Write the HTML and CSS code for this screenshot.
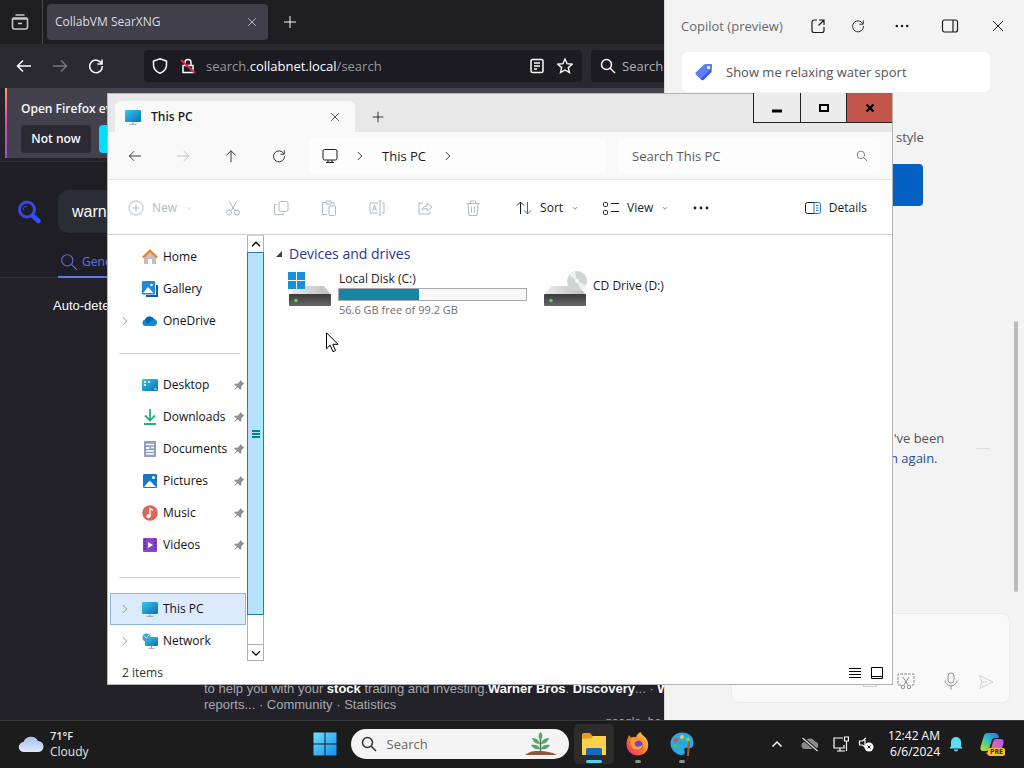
FILE: index.html
```html
<!DOCTYPE html>
<html lang="en">
<head>
	<meta charset="UTF-8">
	<title>This PC</title>
	<link rel="stylesheet" href="styles.css">
</head>
<body>
	<!-- shared icons -->
	<svg class="sprite" aria-hidden="true">
		<defs>
			<linearGradient id="screen" x1="0" y1="0" x2="1" y2="1"><stop offset="0" stop-color="#35c8e8"/><stop offset="1" stop-color="#0b6fb8"/></linearGradient>
			<linearGradient id="drivetop" x1="0" y1="0" x2="1" y2="0"><stop offset="0" stop-color="#ececec"/><stop offset="1" stop-color="#bdbdbd"/></linearGradient>
			<linearGradient id="drivefront" x1="0" y1="0" x2="0" y2="1"><stop offset="0" stop-color="#3c3c3c"/><stop offset="1" stop-color="#666"/></linearGradient>
			<linearGradient id="start" x1="0" y1="0" x2="1" y2="1"><stop offset="0" stop-color="#6fe3ff"/><stop offset="1" stop-color="#0f8cf0"/></linearGradient>
			<linearGradient id="cloud" x1="0" y1="0" x2="0" y2="1"><stop offset="0" stop-color="#a9bff2"/><stop offset="1" stop-color="#dfe8fb"/></linearGradient>
			<linearGradient id="fox" x1="1" y1="0" x2="0" y2="1"><stop offset="0" stop-color="#ffe23d"/><stop offset=".5" stop-color="#ff7a2a"/><stop offset="1" stop-color="#f0227a"/></linearGradient>
			<linearGradient id="copa" x1="1" y1="0" x2="0" y2="1"><stop offset="0" stop-color="#2a6cf0"/><stop offset=".45" stop-color="#28b8d8"/><stop offset=".75" stop-color="#7cd848"/><stop offset="1" stop-color="#f0d040"/></linearGradient>
			<linearGradient id="copb" x1="1" y1="0" x2="0" y2="1"><stop offset="0" stop-color="#a060f8"/><stop offset=".6" stop-color="#f060a8"/><stop offset="1" stop-color="#ff9860"/></linearGradient>
		</defs>
		<symbol id="i-left" viewBox="0 0 16 16"><path d="M15 8H1.500M7 2.500L1.500 8L7 13.500"/></symbol>
		<symbol id="i-right" viewBox="0 0 16 16"><path d="M1 8h13.500M9 2.500L14.500 8L9 13.500"/></symbol>
		<symbol id="i-up" viewBox="0 0 16 16"><path d="M8 15V2M2.500 7.500L8 2l5.500 5.500"/></symbol>
		<symbol id="i-reload" viewBox="0 0 16 16"><path d="M13.600 5.500A6.300 6.300 0 1 0 14.300 8M14 1.500V6H9.500"/></symbol>
		<symbol id="i-close" viewBox="0 0 16 16"><path d="M3 3l10 10M13 3L3 13"/></symbol>
		<symbol id="i-plus" viewBox="0 0 16 16"><path d="M8 2v12M2 8h12"/></symbol>
		<symbol id="i-search" viewBox="0 0 16 16"><circle cx="6.500" cy="6.500" r="5"/><path d="M10.200 10.200L15 15"/></symbol>
		<symbol id="i-chev" viewBox="0 0 16 16"><path d="M5.500 3.500L10 8l-4.500 4.500"/></symbol>
		<symbol id="i-down" viewBox="0 0 16 16"><path d="M3.500 6L8 10.500L12.500 6"/></symbol>
		<symbol id="i-top" viewBox="0 0 16 16"><path d="M3.500 10.500L8 6l4.500 4.500"/></symbol>
		<symbol id="i-dots" viewBox="0 0 16 16"><g fill="currentColor" stroke="none"><circle cx="2" cy="8" r="1.400"/><circle cx="8" cy="8" r="1.400"/><circle cx="14" cy="8" r="1.400"/></g></symbol>
		<symbol id="i-pin" viewBox="0 0 12 12"><path d="M7 1l4.500 4-1.300.3-2 2.200.1 2.500-1 .8-2.500-2.600L1.500 11 1 10.700l2.800-3L1.300 5.500l.8-1 2.600.2L6.800 2.500z" fill="#8f8f8f" stroke="none"/></symbol>
		<symbol id="i-pc" viewBox="0 0 16 16"><rect x="0" y="1" width="16" height="12" rx="1.200" fill="url(#screen)" stroke="none"/><path d="M8 13v2M4.500 15.300h7" stroke="#8f9aa5"/></symbol>
	</svg>

	<main class="desktop">
		<!-- browser -->
		<section class="firefox">
			<div class="ff-tabs">
				<button class="ff-view" aria-label="Firefox View"><svg class="icon s20" viewBox="0 0 20 20"><path d="M5.500 3h9M2.500 7h15v8a2 2 0 0 1-2 2h-11a2 2 0 0 1-2-2zM3.500 7V6h13v1M8 11.500h4" stroke-width="1.500"/></svg></button>
				<div class="ff-tab">
					<span>CollabVM SearXNG</span>
					<button aria-label="Close tab"><svg class="icon s12"><use href="#i-close"/></svg></button>
				</div>
				<button class="ff-new" aria-label="New tab"><svg class="icon s16"><use href="#i-plus"/></svg></button>
			</div>
			<div class="ff-bar">
				<button aria-label="Back"><svg class="icon s16 bold"><use href="#i-left"/></svg></button>
				<button class="dim" aria-label="Forward"><svg class="icon s16 bold"><use href="#i-right"/></svg></button>
				<button aria-label="Reload"><svg class="icon s16 bold"><use href="#i-reload"/></svg></button>
				<div class="ff-url">
					<svg class="icon s16" viewBox="0 0 16 16"><path d="M8 .8l6.500 2.200v4c0 4-2.500 6.700-6.500 8.300C4 13.700 1.500 11 1.500 7V3z" stroke-width="1.500"/></svg>
					<svg class="icon s16" viewBox="0 0 16 16"><path d="M3 7.500h10v7H3zM5 7V4.500a3 3 0 0 1 6 0V7" stroke-width="1.500"/><path d="M1 2l14 13" stroke="#e22850" stroke-width="2"/></svg>
					<span class="ff-address">search.<b>collabnet.local</b>/search</span>
					<svg class="icon s16" viewBox="0 0 16 16"><rect x="2" y="1.500" width="12" height="13" rx="1.500" stroke-width="1.500"/><path d="M5 5h6M5 8h6M5 11h3" stroke-width="1.300"/></svg>
					<svg class="icon s16" viewBox="0 0 16 16"><path d="M8 1l2.100 4.700 5.100.5-3.900 3.400 1.200 5L8 12l-4.500 2.600 1.200-5L.8 6.200l5.100-.5z" stroke-width="1.400"/></svg>
				</div>
				<label class="ff-find"><svg class="icon s16 bold"><use href="#i-search"/></svg><input type="text" placeholder="Search" aria-label="Search"></label>
			</div>
			<div class="ff-note">
				<strong>Open Firefox even</strong>
				<div class="ff-note-btns">
					<button>Not now</button>
					<button class="primary" aria-label="Open automatically"></button>
				</div>
			</div>
			<div class="searx-head">
				<div class="searx-row">
					<svg class="searx-logo" viewBox="0 0 24 24"><circle cx="10" cy="9.500" r="7.500" fill="none" stroke="#3b46e8" stroke-width="3"/><path d="M6 10a4 4 0 0 1 4-4" fill="none" stroke="#3b46e8"/><path d="M16 16l5.500 5" stroke="#3050f8" stroke-width="4.500" stroke-linecap="round"/></svg>
					<input class="searx-q" type="text" value="warner" aria-label="Query">
				</div>
				<a class="searx-cat" href="#general"><svg class="icon s18"><use href="#i-search"/></svg>General</a>
			</div>
			<div class="searx-body">
				<p class="searx-lang">Auto-detect</p>
				<p class="searx-hit">to help you with your <b>stock</b> trading and investing.<b>Warner Bros</b>. <b>Discovery</b>... · <b>W</b><br>reports... · Community · Statistics</p>
				<p class="searx-engine">google &nbsp;ho</p>
			</div>
		</section>

		<!-- side panel -->
		<aside class="copilot">
			<header class="cp-head">
				<h2>Copilot (preview)</h2>
				<button aria-label="Open in browser"><svg class="icon s16" viewBox="0 0 16 16"><path d="M7 2H4a2 2 0 0 0-2 2v8.500a2 2 0 0 0 2 2h8a2 2 0 0 0 2-2V9M9 2h5v5M14 2L8.500 7.500" stroke-width="1.200"/></svg></button>
				<button aria-label="Refresh"><svg class="icon s14"><use href="#i-reload"/></svg></button>
				<button aria-label="More"><svg class="icon s14"><use href="#i-dots"/></svg></button>
				<button aria-label="Dock"><svg class="icon s18" viewBox="0 0 18 16"><rect x="1.500" y="2" width="15" height="12" rx="2" stroke-width="1.200"/><path d="M12 2v12" stroke-width="1.200"/></svg></button>
				<button aria-label="Close"><svg class="icon s16"><use href="#i-close"/></svg></button>
			</header>
			<button class="cp-hint">
				<svg class="s18" viewBox="0 0 18 18"><path d="M9.500 1.500L17 1l-.5 8-8 8c-.8.5-1.500.4-2 0L1 11.500c-.5-.7-.5-1.300 0-2z" fill="#3a58e0"/><path d="M9.500 1.500L17 1l-.2 4L6 16 1 11.500c-.5-.7-.5-1.300 0-2z" fill="#5a80f2"/><circle cx="13.500" cy="4.500" r="1.700" fill="#ffe38a"/></svg>
				Show me relaxing water sport
			</button>
			<p class="cp-style">style</p>
			<button class="cp-blue" aria-label="Choose"></button>
			<div class="cp-msg"><p>I've been<br><a href="#signin">n again.</a></p><hr></div>
			<div class="cp-input">
				<button class="faint" aria-label="Add image"><svg class="icon s18" viewBox="0 0 18 18"><path d="M2 14.500c1-4 13-4 14 0z"/></svg></button>
				<button aria-label="Snip"><svg class="icon s18" viewBox="0 0 18 18"><path d="M4 13H1V2h16v11h-3" stroke-dasharray="3 1"/><path d="M6 5l5 8M12 5l-5 8"/><circle cx="6" cy="15" r="1.800"/><circle cx="12" cy="15" r="1.800"/></svg></button>
				<button aria-label="Voice"><svg class="icon s18" viewBox="0 0 18 18"><rect x="6" y="1" width="6" height="10" rx="3"/><path d="M3 8.500c0 7 12 7 12 0M9 14v3.500"/></svg></button>
				<button class="faint" aria-label="Send"><svg class="icon s16" viewBox="0 0 16 16"><path d="M1.500 1.500L15 8 1.500 14.500 4 8zM4 8h5"/></svg></button>
			</div>
			<div class="cp-scroll"></div>
		</aside>

		<!-- file explorer -->
		<section class="explorer">
			<header class="ex-title">
				<div class="ex-tab">
					<svg class="s16"><use href="#i-pc"/></svg>
					<span>This PC</span>
					<button aria-label="Close tab"><svg class="icon s12"><use href="#i-close"/></svg></button>
				</div>
				<button class="ex-new" aria-label="New tab"><svg class="icon s14"><use href="#i-plus"/></svg></button>
				<div class="ex-caption">
					<button aria-label="Minimize"><svg width="12" height="12" viewBox="0 0 12 12"><path d="M1 9h10" stroke="#000" stroke-width="3"/></svg></button>
					<button aria-label="Maximize"><svg width="12" height="12" viewBox="0 0 12 12"><rect x="2" y="3" width="8" height="6" fill="none" stroke="#000" stroke-width="2"/></svg></button>
					<button class="close" aria-label="Close"><svg width="12" height="12" viewBox="0 0 12 12"><path d="M2.500 2.500l7 7M9.500 2.500l-7 7" stroke="#000" stroke-width="2.400"/></svg></button>
				</div>
			</header>
			<div class="ex-nav">
				<button aria-label="Back"><svg class="icon s14"><use href="#i-left"/></svg></button>
				<button class="off" aria-label="Forward"><svg class="icon s14"><use href="#i-right"/></svg></button>
				<button aria-label="Up"><svg class="icon s14"><use href="#i-up"/></svg></button>
				<button aria-label="Refresh"><svg class="icon s14"><use href="#i-reload"/></svg></button>
				<nav class="ex-path">
					<svg class="icon s16" viewBox="0 0 16 16"><rect x="1" y="1.500" width="14" height="10.500" rx="1.500"/><path d="M6 12v2.500M10 12v2.500M4 14.500h8"/></svg>
					<svg class="icon s14"><use href="#i-chev"/></svg>
					<a href="#pc">This PC</a>
					<svg class="icon s14"><use href="#i-chev"/></svg>
				</nav>
				<label class="ex-search"><input type="text" placeholder="Search This PC" aria-label="Search This PC"><svg class="icon s12"><use href="#i-search"/></svg></label>
			</div>
			<div class="ex-tools">
				<button class="off"><svg class="icon s16" viewBox="0 0 16 16"><circle cx="8" cy="8" r="7"/><path d="M8 4.500v7M4.500 8h7"/></svg>New<svg class="icon s8"><use href="#i-down"/></svg></button>
				<div class="ex-edit">
					<button class="off" aria-label="Cut"><svg class="icon s16" viewBox="0 0 16 16"><path d="M4 1l6 10M12 1L6 11"/><circle cx="4" cy="12.500" r="2.500"/><circle cx="12" cy="12.500" r="2.500"/></svg></button>
					<button class="off" aria-label="Copy"><svg class="icon s16" viewBox="0 0 16 16"><rect x="6" y="1.500" width="9" height="10" rx="1.500"/><path d="M3.500 4.500H1.500v10h9v-1.500"/></svg></button>
					<button class="off" aria-label="Paste"><svg class="icon s16" viewBox="0 0 16 16"><path d="M6 14.500H1.500v-12H5M10 2.500h3V5M5 1h5v3H5z"/><rect x="8" y="6" width="6.500" height="9.500" rx="1"/></svg></button>
					<button class="off" aria-label="Rename"><svg class="icon s16" viewBox="0 0 16 16"><path d="M9 13H1V3h8M13 3h2v10h-2M11 1v14M9.500 1h3M9.500 15h3M3.500 11l2-6 2 6M4 9h3"/></svg></button>
					<button class="off" aria-label="Share"><svg class="icon s16" viewBox="0 0 16 16"><path d="M6 3H2v11h11v-3M5 10c.5-3 2.500-4 5-4V3l5 4-5 4V8.500c-2 0-3.500 0-5 1.500z"/></svg></button>
					<button class="off" aria-label="Delete"><svg class="icon s16" viewBox="0 0 16 16"><path d="M1.500 3.500h13M5.500 3V1h5v2M3 3.500l1 12h8l1-12M6.500 6.500v6M9.500 6.500v6"/></svg></button>
				</div>
				<button class="sort"><svg class="icon s16" viewBox="0 0 16 16"><path d="M4.500 14V2M1 5.500L4.500 2 8 5.500"/><path d="M11.500 2v12M8 10.500l3.500 3.500 3.500-3.500" stroke="#1878c8"/></svg>Sort<svg class="icon s8"><use href="#i-down"/></svg></button>
				<button class="view"><svg class="icon s16" viewBox="0 0 16 16"><rect x=".5" y="2.500" width="4" height="4" rx="1"/><rect x=".5" y="10.500" width="4" height="4" rx="1"/><path d="M8 3.500h8M8 11.500h8"/></svg>View<svg class="icon s8"><use href="#i-down"/></svg></button>
				<button aria-label="More"><svg class="icon s16"><use href="#i-dots"/></svg></button>
				<button class="details"><svg class="icon s16" viewBox="0 0 16 16"><path d="M9 2.500H2.500a2 2 0 0 0-2 2v7a2 2 0 0 0 2 2H9"/><path d="M9 2.500h4.500a2 2 0 0 1 2 2v7a2 2 0 0 1-2 2H9zM11 5.500h2.500M11 8h2.500M11 10.500h2.500" stroke="#1878c8"/></svg>Details</button>
			</div>
			<div class="ex-body">
				<nav class="ex-tree">
					<a href="#home"><svg class="s16 glyph" viewBox="0 0 16 16"><path d="M2 8l6-5 6 5v7h-4v-5H6v5H2z" fill="#c4c0c0"/><path d="M.8 8.500L8 1.800l7.200 6.700" fill="none" stroke="#e8822a" stroke-width="2.200"/></svg>Home</a>
					<a href="#gallery"><svg class="s16 glyph" viewBox="0 0 16 16"><path d="M4 15h11V4" fill="none" stroke="#0f5ea8" stroke-width="2"/><rect width="13" height="13.500" rx="1" fill="#1c8ad8"/><path d="M1 12l5-6 5.500 6z" fill="#fff"/><circle cx="9.500" cy="4" r="1.300" fill="#fff"/></svg>Gallery</a>
					<a href="#onedrive"><svg class="icon s14 twist"><use href="#i-chev"/></svg><svg class="s16 glyph" viewBox="0 0 16 16"><path d="M3.500 13a3.300 3.300 0 0 1-.5-6.500 5 5 0 0 1 9-.5 3.600 3.600 0 0 1 .5 7z" fill="#1689dc"/><path d="M3 6.500a5 5 0 0 1 9-.5L5 11z" fill="#0a62b0"/></svg>OneDrive</a>
					<hr>
					<a href="#desktop"><svg class="s16 glyph" viewBox="0 0 16 16"><rect y="2" width="16" height="12" rx="1.200" fill="url(#screen)"/><path d="M2 5h2M2 8h2M6 5h2" stroke="#fff" stroke-width="1.300"/><path d="M12 12h3" stroke="#bfe6ff"/></svg>Desktop<svg class="s12 pin"><use href="#i-pin"/></svg></a>
					<a href="#downloads"><svg class="s16 glyph" viewBox="0 0 16 16"><path d="M8 0v11M3 6.500L8 11.500l5-5M2 15h12" fill="none" stroke="#27b07a" stroke-width="1.800"/></svg>Downloads<svg class="s12 pin"><use href="#i-pin"/></svg></a>
					<a href="#documents"><svg class="s16 glyph" viewBox="0 0 16 16"><rect x="2" y="0" width="12" height="16" rx="1" fill="#8f9fc4"/><path d="M4 3.500h8M4 10h8M4 13h8M9 6.500h3" stroke="#fff" stroke-width="1.300"/><path d="M4 6h3.500v2H4z" fill="#fff"/></svg>Documents<svg class="s12 pin"><use href="#i-pin"/></svg></a>
					<a href="#pictures"><svg class="s16 glyph" viewBox="0 0 16 16"><rect x="1" y="1" width="14" height="14" rx="1.200" fill="#1778c8"/><path d="M2 14l5.500-6.500L14 14z" fill="#fff"/><circle cx="11.500" cy="4.500" r="1.500" fill="#fff"/></svg>Pictures<svg class="s12 pin"><use href="#i-pin"/></svg></a>
					<a href="#music"><svg class="s16 glyph" viewBox="0 0 16 16"><circle cx="8" cy="8" r="7.800" fill="#d9685a"/><path d="M8 11.500V3.500l3 2" fill="none" stroke="#fff" stroke-width="1.400"/><circle cx="6.500" cy="11.200" r="2" fill="#fff"/></svg>Music<svg class="s12 pin"><use href="#i-pin"/></svg></a>
					<a href="#videos"><svg class="s16 glyph" viewBox="0 0 16 16"><rect x="1" y="1" width="14" height="14" rx="1" fill="#8a44cc"/><path d="M3 2v12M13 2v12" stroke="#5a2396" stroke-width="1.500" stroke-dasharray="1.500 1.500"/><path d="M6 5l5 3-5 3z" fill="#fff"/></svg>Videos<svg class="s12 pin"><use href="#i-pin"/></svg></a>
					<hr>
					<a class="on" href="#pc"><svg class="icon s14 twist"><use href="#i-chev"/></svg><svg class="s16 glyph"><use href="#i-pc"/></svg>This PC</a>
					<a href="#network"><svg class="icon s14 twist"><use href="#i-chev"/></svg><svg class="s16 glyph" viewBox="0 0 16 16"><rect x="3" y="4" width="13" height="9" rx="1" fill="url(#screen)"/><path d="M9.500 13v2M6.500 15.300h6" stroke="#8f9aa5"/><circle cx="4.500" cy="4.500" r="4" fill="#3f9ed0"/><path d="M1.500 3c2 0 2 2 3 2s1-3 3-3" stroke="#d6f0fa" fill="none"/></svg>Network</a>
				</nav>
				<div class="ex-scroll">
					<button aria-label="Scroll up"><svg class="icon s14 bold"><use href="#i-top"/></svg></button>
					<div class="ex-thumb"><i></i><i></i><i></i></div>
					<button aria-label="Scroll down"><svg class="icon s14 bold"><use href="#i-down"/></svg></button>
				</div>
				<div class="ex-files">
					<h3><svg width="8" height="8" viewBox="0 0 8 8"><path d="M7 1v6H1z" fill="#404040"/></svg>Devices and drives</h3>
					<div class="drives">
						<div class="drive">
							<svg class="disk" viewBox="0 0 44 38"><path d="M8 15h28l7 9H1z" fill="url(#drivetop)"/><rect x="1" y="23" width="42" height="12" rx="1" fill="url(#drivefront)"/><circle cx="8" cy="29.500" r="1.800" fill="#46e04a"/><path d="M0 1h8v8H0zM9 1h8v8H9zM0 10h8v8H0zM9 10h8v8H9z" fill="#1590dc"/></svg>
							<div class="drive-info">
								<span>Local Disk (C:)</span>
								<div class="bar"><div class="fill" style="width:43%"></div></div>
								<small>56.6 GB free of 99.2 GB</small>
							</div>
						</div>
						<div class="drive">
							<svg class="disk" viewBox="0 0 44 38"><path d="M8 15h28l7 9H1z" fill="url(#drivetop)"/><rect x="1" y="23" width="42" height="12" rx="1" fill="url(#drivefront)"/><circle cx="8" cy="29.500" r="1.800" fill="#46e04a"/><circle cx="34" cy="10" r="10" fill="#cfd4d4"/><path d="M34 10L26 3.500a10 10 0 0 1 6-3zM34 10l9 4a10 10 0 0 1-5 5z" fill="#eef2f2"/><circle cx="34" cy="10" r="2" fill="#f8f8f8"/></svg>
							<span>CD Drive (D:)</span>
						</div>
					</div>
				</div>
			</div>
			<footer class="ex-status">
				<span>2 items</span>
				<button aria-label="Details view"><svg width="12" height="12" viewBox="0 0 12 12"><path d="M0 1.500h12M0 4.500h12M0 7.500h12M0 10.500h12" stroke="#000"/></svg></button>
				<button aria-label="Tiles view"><svg width="12" height="12" viewBox="0 0 12 12"><path d="M.5.500h11v11H.5zM0 9.500h12" fill="none" stroke="#000"/></svg></button>
			</footer>
		</section>
		<svg class="cursor" viewBox="0 0 13 21"><path d="M.5.800v16l3.700-3.600 2.700 6.500 2.600-1.100-2.700-6.300h5.200z" fill="#fff" stroke="#000"/></svg>
	</main>

	<footer class="taskbar">
		<button class="weather">
			<svg width="26" height="18" viewBox="0 0 26 18"><path d="M6 17a5 5 0 0 1-.5-10A8 8 0 0 1 20 6a5.500 5.500 0 0 1 0 11z" fill="url(#cloud)"/></svg>
			<span><b>71°F</b><br>Cloudy</span>
		</button>
		<div class="tb-center">
			<button aria-label="Start"><svg width="24" height="24" viewBox="0 0 24 24"><path d="M.5.500h11v11H.5zM12.500.500h11v11h-11zM.5 12.500h11v11H.5zM12.500 12.500h11v11h-11z" fill="url(#start)"/></svg></button>
			<label class="tb-search">
				<svg class="icon s16 bold"><use href="#i-search"/></svg>
				<input type="text" placeholder="Search" aria-label="Search">
				<svg width="32" height="24" viewBox="0 0 32 24"><path d="M0 23c5-4 9-4 15-4s11 1 17 4z" fill="#8a5a3a"/><path d="M15.500 20V4" stroke="#3c7a4a" stroke-width="1.500"/><path d="M15.500 8c-3-3-2-6 0-8 2 2 3 5 0 8zM15 12C10 12 8 9 7 6c4 0 7 2 8 6zM16 12c5 0 7-3 8-6-4 0-7 2-8 6zM15 17c-5 1-7-1-9-4 4-1 8 0 9 4zM16 17c5 1 7-1 9-4-4-1-8 0-9 4z" fill="#5aa36c"/></svg>
			</label>
			<button class="on running" aria-label="File Explorer"><svg width="26" height="24" viewBox="0 0 26 24"><path d="M1 2.500A1.500 1.500 0 0 1 2.500 1H9l2.500 3H23a1.500 1.500 0 0 1 1.500 1.500V21H1z" fill="#e0a020"/><path d="M1 6.500h9L12 4h13v19H1z" fill="#ffd04c"/><path d="M5 23v-5.500A1.500 1.500 0 0 1 6.500 16h13a1.500 1.500 0 0 1 1.500 1.500V23z" fill="#1768b8"/></svg></button>
			<button class="running" aria-label="Firefox"><svg width="24" height="24" viewBox="0 0 24 24"><path d="M14.500 0c1 3 4 4 6 7 4 7 1 16-8.500 16.500C3 23.500-.5 16 .8 9 1.300 6 3 4 3 3l2 2.500C7 4.500 9 4.500 10 5.200 11 2 13 1 14.500 0z" fill="url(#fox)"/><circle cx="12" cy="13.500" r="5" fill="#7a3fd8"/><path d="M5 7c3-1 5 0 7 2-3 0-4 2-3 4 1 3 6 2 8-1-.5 5-4 7-8 5.500C5 16 3.500 11 5 7z" fill="#ff9e2c"/></svg></button>
			<button class="running" aria-label="Paint"><svg width="24" height="24" viewBox="0 0 24 24"><path d="M12 .5C19 .5 23.500 5 23.500 11c0 4-2 6-5 5-3-1-5 0-4 3s-1 4.500-4 4C5 22 .5 17 .5 11.500S5 .5 12 .5z" fill="#2ba8e0"/><circle cx="6" cy="8" r="2" fill="#e8483c"/><circle cx="12" cy="5" r="2" fill="#f5c83c"/><circle cx="5.500" cy="14" r="2" fill="#4cc25a"/><circle cx="18" cy="7.500" r="2" fill="#74d858"/><path d="M18 9l2 1-1 14h-2z" fill="#a85a2c"/></svg></button>
		</div>
		<div class="tb-tray">
			<button aria-label="Show hidden icons"><svg class="icon s16 bold"><use href="#i-top"/></svg></button>
			<button class="tray-cloud" aria-label="OneDrive"><svg class="s18" viewBox="0 0 18 18"><path d="M4 14a3.500 3.500 0 0 1 0-7 5.500 5.500 0 0 1 10-.5A3.800 3.800 0 0 1 14 14z" fill="#8a8a8a"/><path d="M1.500 3l15 13" stroke="#1c1c1c" stroke-width="3"/><path d="M1.500 3l15 13" stroke="#ddd" stroke-width="1.200"/></svg></button>
			<button class="tray-net" aria-label="Network and volume">
				<svg class="icon s16" viewBox="0 0 16 16"><path d="M10 2H1v10h10V9M4 15h8M7 12v3" stroke-width="1.200"/><path d="M11.500 1h4v4h-4zM13.500 5v10" stroke-width="1.200"/></svg>
				<svg class="icon s16" viewBox="0 0 16 16"><path d="M8 2L4.500 5H1.500v4h3L7 11V2" stroke-width="1.200"/><circle cx="11" cy="11" r="4.500" fill="#fff" stroke="none"/><path d="M9.500 9.500l3 3M12.500 9.500l-3 3" stroke="#222"/></svg>
			</button>
			<button class="clock">12:42 AM<br>6/6/2024</button>
			<button aria-label="Notifications"><svg class="s16" viewBox="0 0 16 16"><path d="M8 1a5 5 0 0 1 5 5v4l1.500 2.500h-13L3 10V6a5 5 0 0 1 5-5zM6 13.500h4a2 2 0 0 1-4 0z" fill="#5fdcf5"/></svg></button>
			<button class="tray-cop" aria-label="Copilot">
				<svg width="24" height="24" viewBox="0 0 24 24"><path d="M8 1h7c2 0 3 1 3.500 3L19 6h-4c-2 0-3 1-3.500 3L9.500 16c-.5 2-1.500 3-3.500 3H3c-2 0-3-2-2.500-4l3-10C4.200 2.500 5.500 1 8 1z" fill="url(#copa)"/><path d="M16 7h5c2 0 3 2 2.500 4l-2.500 9c-.6 2-2 3-4 3H9c-1.500 0-2.500-1-3-2.500 3 0 4.500-1.500 5-4l2-6.500c.5-2 1.500-3 3-3z" fill="url(#copb)"/></svg>
				<span>PRE</span>
			</button>
		</div>
	</footer>
</body>
</html>
```
FILE: styles.css
```css
*{
	box-sizing: border-box;
}
body{
	display: flex;
	flex-direction: column;
	height: 100vh;
	margin: 0;
	overflow: hidden;
	font: 12px/16px "Open Sans", "Noto Sans", sans-serif;
	color: #1b1b1b;
}
button,input{
	font: inherit;
	color: inherit;
	background: none;
	border: 0;
	padding: 0;
	margin: 0;
}
button{
	display: flex;
	align-items: center;
	justify-content: center;
	flex: none;
}
input{
	min-width: 0;
	flex: 1;
	outline: none;
}
input::placeholder{
	color: inherit;
	opacity: 1;
}
a{
	color: inherit;
	text-decoration: none;
}
p,h2,h3{
	margin: 0;
	font-weight: 400;
}
svg{
	flex: none;
}
.sprite{
	position: absolute;
	width: 0;
	height: 0;
}
.icon{
	fill: none;
	stroke: currentColor;
	stroke-width: 1;
}
.bold{
	stroke-width: 1.5;
}
.s8{ width: 8px; height: 8px; }
.s12{ width: 12px; height: 12px; }
.s14{ width: 14px; height: 14px; }
.s16{ width: 16px; height: 16px; }
.s18{ width: 18px; height: 18px; }
.s20{ width: 20px; height: 20px; }

.desktop{
	position: relative;
	flex: 1;
	min-height: 0;
	overflow: hidden;
	background: #1c1b22;
}

/* firefox */
.firefox{
	position: absolute;
	top: 0;
	left: 0;
	right: 360px;
	bottom: 0;
	display: flex;
	flex-direction: column;
	overflow: hidden;
	color: #fbfbfe;
	background: #222228;
}
.ff-tabs{
	display: flex;
	align-items: center;
	height: 44px;
	flex: none;
	background: #1e1e22;
}
.ff-view{
	width: 43px;
	height: 44px;
	padding-right: 3px;
	border-right: 1px solid #48474f;
	color: #c8c8cc;
}
.ff-tab{
	display: flex;
	align-items: center;
	justify-content: space-between;
	width: 221px;
	height: 36px;
	margin-left: 4px;
	padding: 0 10px 0 8px;
	border-radius: 4px;
	background: #403f4a;
	color: #dcdce0;
}
.ff-new{
	width: 44px;
}
.ff-bar{
	display: flex;
	align-items: center;
	height: 44px;
	flex: none;
	padding-left: 6px;
	background: #2a2930;
}
.ff-bar button{
	width: 36px;
	height: 32px;
}
.ff-bar .dim{
	color: #78777e;
}
.ff-url{
	display: flex;
	align-items: center;
	gap: 12px;
	flex: 1;
	height: 32px;
	margin-left: 30px;
	padding: 0 9px 0 8px;
	border-radius: 4px;
	background: #1c1b22;
}
.ff-address{
	flex: 1;
	margin-left: -2px;
	font-size: 13px;
	color: #98979e;
}
.ff-address b{
	font-weight: 400;
	color: #fbfbfe;
}
.ff-find{
	display: flex;
	align-items: center;
	gap: 6px;
	width: 73px;
	height: 32px;
	margin-left: 9px;
	padding-left: 9px;
	border-radius: 4px 0 0 4px;
	background: #1c1b22;
	font-size: 13px;
}
.ff-find input{
	color: #b0afb5;
}
.ff-note{
	flex: none;
	height: 70px;
	margin: 0 0 3px 5px;
	padding: 11px 0 0 14px;
	border-left: 2px solid;
	border-image: linear-gradient(#ff9a62, #d94f9a, #8a50e0) 1;
	background: #42414d;
}
.ff-note strong{
	display: block;
	line-height: 20px;
	margin-bottom: 6px;
	font-weight: 600;
}
.ff-note-btns{
	display: flex;
	gap: 8px;
}
.ff-note button{
	width: 70px;
	height: 28px;
	border-radius: 4px;
	background: #2b2a33;
	font-weight: 600;
}
.ff-note .primary{
	background: #00ddff;
}
.searx-head{
	flex: none;
	height: 117px;
	padding: 28px 0 0 17px;
	background: #1e1e24;
	border-top: 1px solid #2a2a30;
	border-bottom: 1px solid #303038;
	font-family: "Noto Sans", sans-serif;
}
.searx-row{
	display: flex;
	align-items: center;
	gap: 17px;
	margin-bottom: 15px;
}
.searx-logo{
	width: 24px;
	height: 24px;
}
.searx-q{
	height: 43px;
	padding: 0 14px;
	border-radius: 10px;
	background: #2b2d35;
	font: 16px "Liberation Sans", Arial, sans-serif;
}
.searx-cat{
	display: flex;
	align-items: center;
	gap: 4px;
	width: 90px;
	height: 30px;
	margin-left: 41px;
	padding-left: 2px;
	border-bottom: 2px solid #5a7ae8;
	color: #5a6ee0;
	font-size: 12px;
}
.searx-body{
	display: flex;
	flex-direction: column;
	flex: 1;
	min-height: 0;
	padding: 20px 0 0 53px;
	font-family: "Liberation Sans", Arial, sans-serif;
	font-size: 13px;
}
.searx-hit{
	margin: auto 0 1px 151px;
	color: #a8a8ae;
	white-space: nowrap;
}
.searx-hit b{
	color: #fff;
}
.searx-engine{
	height: 6px;
	margin-left: 552px;
	overflow: hidden;
	color: #a8a8ae;
	font-size: 12px;
	white-space: nowrap;
}

/* copilot */
.copilot{
	position: absolute;
	top: 0;
	right: 0;
	bottom: 0;
	width: 360px;
	padding: 0 14px 17px 16px;
	display: flex;
	flex-direction: column;
	background: #f3f3f3;
	border-left: 1px solid #d8d8e0;
}
.cp-head{
	display: flex;
	align-items: center;
	height: 52px;
	flex: none;
	margin-right: -12px;
}
.cp-head h2{
	flex: 1;
	font-size: 13px;
	color: #6a6a6a;
}
.cp-head button{
	width: 40px;
	height: 32px;
}
.cp-head button:nth-of-type(n+3){
	width: 48px;
}
.cp-hint{
	justify-content: flex-start;
	gap: 13px;
	height: 40px;
	margin: 0 20px 0 1px;
	padding-left: 13px;
	border-radius: 6px;
	background: #fff;
	color: #555;
	font-size: 13px;
}
.cp-style{
	margin: 35px 0 17px 215px;
	font-size: 13px;
	line-height: 20px;
	color: #555;
}
.cp-blue{
	height: 42px;
	margin-right: 87px;
	border-radius: 4px;
	background: #0560c4;
}
.cp-msg{
	display: flex;
	align-items: center;
	justify-content: space-between;
	margin: 222px 20px 0 209px;
	font-size: 13px;
	line-height: 20px;
	color: #555;
}
.cp-msg a{
	color: #24509c;
}
.cp-msg hr{
	width: 14px;
	margin: 0;
	border: 0;
	border-top: 1px solid #dedede;
}
.cp-input{
	display: flex;
	align-items: flex-end;
	justify-content: flex-end;
	gap: 18px;
	height: 90px;
	margin: auto 0 0 50px;
	padding: 0 15px 12px;
	border: 1px solid #ececec;
	border-radius: 8px;
	background: #f9f9f9;
	color: #909090;
}
.cp-input .faint{
	color: #d0d0d0;
}
.cp-input button + button + button{
	margin-left: 9px;
}
.cp-input button:last-child{
	margin-left: 0;
}
.cp-scroll{
	position: absolute;
	top: 321px;
	right: 6px;
	width: 4px;
	height: 271px;
	border-radius: 2px;
	background: #bcbcbc;
}

/* explorer */
.explorer{
	position: absolute;
	top: 93px;
	left: 107px;
	right: 131px;
	bottom: 35px;
	display: flex;
	flex-direction: column;
	border: 1px solid #b4b4b8;
	background: #fff;
}
.ex-title{
	display: flex;
	height: 38px;
	flex: none;
	background: #e8e8e8;
}
.ex-tab{
	display: flex;
	align-items: center;
	gap: 10px;
	width: 240px;
	margin: 7px 0 0 7px;
	padding: 0 14px 0 10px;
	border-radius: 6px 6px 0 0;
	background: #f9f9f9;
	font-weight: 600;
}
.ex-tab span{
	flex: 1;
}
.ex-new{
	width: 46px;
	padding-top: 8px;
}
.ex-caption{
	display: flex;
	height: 30px;
	margin: -1px 0 0 auto;
}
.ex-caption button{
	width: 46px;
	border: solid #222;
	border-width: 0 0 1px 1px;
	background: #ececec;
}
.ex-caption button:first-child{
	width: 47px;
}
.ex-caption .close{
	background: #c4554a;
}
.ex-nav{
	display: flex;
	align-items: center;
	height: 48px;
	flex: none;
	padding: 0 12px 0 3px;
	border-bottom: 1px solid #e4e4e4;
	background: #f9f9f9;
	font-size: 13px;
}
.ex-nav button{
	width: 48px;
	height: 32px;
}
.explorer .off{
	color: #b0bac4;
}
.ex-path{
	display: flex;
	align-items: center;
	gap: 15px;
	flex: 1;
	height: 34px;
	margin-left: 6px;
	padding-left: 13px;
	background: #fdfdfd;
	border-radius: 4px;
}
.ex-search{
	display: flex;
	align-items: center;
	width: 262px;
	height: 34px;
	margin-left: 12px;
	padding: 0 12px 0 14px;
	border-radius: 4px;
	background: #fdfdfd;
	color: #5c5c5c;
}
.ex-tools{
	display: flex;
	align-items: center;
	height: 55px;
	flex: none;
	padding: 2px 25px 0 20px;
	border-bottom: 1px solid #d0d0d0;
}
.ex-tools button{
	gap: 8px;
}
.ex-edit{
	display: flex;
	gap: 32px;
	margin: 0 35px 0 32px;
}
.ex-tools .sort,.ex-tools .view{
	margin-right: 24px;
}
.ex-tools .details{
	margin-left: auto;
}
.ex-body{
	display: flex;
	flex: 1;
	min-height: 0;
}
.ex-tree{
	width: 139px;
	padding: 6px 1px 0 2px;
	color: #111;
}
.ex-tree a{
	display: grid;
	grid-template-columns: 19px 16px 1fr 12px;
	align-items: center;
	column-gap: 5px;
	height: 32px;
	padding: 0 0 0 7px;
	border: 1px solid transparent;
}
.ex-tree .twist{
	grid-column: 1;
	color: #888;
}
.ex-tree .glyph{
	grid-column: 2;
}
.ex-tree .on{
	border-color: #8eb4dc;
	background: #dceafc;
}
.ex-tree hr{
	height: 1px;
	margin: 16px 6px 15px 9px;
	border: 0;
	background: #ccc;
}
.ex-scroll{
	display: flex;
	flex-direction: column;
	width: 17px;
	border: 1px solid #b0b0b0;
	border-top-color: #d0d0d0;
}
.ex-scroll button{
	height: 16px;
	color: #000;
}
.ex-scroll button:last-child{
	margin-top: auto;
	border-top: 1px solid #b0b0b0;
}
.ex-thumb{
	display: flex;
	flex-direction: column;
	align-items: center;
	justify-content: center;
	gap: 1px;
	height: 363px;
	margin: 0 -1px;
	border: 1px solid #26809c;
	background: linear-gradient(90deg, #b8e0fc 65%, #a8ecfc 65%);
}
.ex-thumb i{
	width: 8px;
	height: 2px;
	background: #087e98;
}
.ex-files{
	flex: 1;
	padding: 9px 11px;
}
.ex-files h3{
	display: flex;
	align-items: center;
	gap: 6px;
	font-size: 14px;
	line-height: 20px;
	color: #2c3494;
}
.drives{
	display: flex;
	gap: 16px;
	padding: 7px 0 0 13px;
}
.drive{
	display: flex;
	gap: 6px;
	width: 239px;
}
.drive > span{
	margin-top: 7px;
}
.disk{
	width: 44px;
	height: 38px;
}
.drive-info{
	flex: 1;
}
.drive-info span,.drive-info small{
	display: block;
	padding-left: 1px;
}
.drive-info small{
	font-size: 11px;
	color: #707070;
}
.bar{
	height: 13px;
	margin: 1px 0;
	border: 1px solid #aaa;
	background: #f8f8f8;
}
.fill{
	height: 100%;
	background: #1686a4;
}
.ex-status{
	display: flex;
	align-items: center;
	gap: 10px;
	height: 23px;
	flex: none;
	padding: 0 9px 0 14px;
	color: #333;
}
.ex-status span{
	flex: 1;
}
.cursor{
	position: absolute;
	top: 332px;
	left: 326px;
	width: 13px;
	height: 21px;
}

/* taskbar */
.taskbar{
	display: grid;
	grid-template-columns: 1fr auto 1fr;
	align-items: center;
	height: 48px;
	flex: none;
	padding: 0 18px 1px 0;
	border-top: 1px solid #38383c;
	background: #1c1c1c;
	color: #fff;
}
.weather{
	justify-self: start;
	gap: 6px;
	padding-left: 18px;
	text-align: left;
}
.weather b{
	font-weight: 600;
	font-size: 11px;
}
.weather span{
	color: #e4e4e4;
}
.tb-center{
	display: flex;
	align-items: center;
	gap: 4px;
}
.tb-center button{
	position: relative;
	width: 40px;
	height: 40px;
	border-radius: 4px;
}
.tb-center .on{
	background: #2c2c2c;
}
.tb-center .running::after{
	content: "";
	position: absolute;
	left: 17px;
	bottom: 1px;
	width: 6px;
	height: 3px;
	border-radius: 2px;
	background: #8c8c8c;
}
.tb-center .on::after{
	left: 12px;
	width: 16px;
	background: #4cd0f4;
}
.tb-search{
	display: flex;
	align-items: center;
	gap: 10px;
	width: 218px;
	height: 30px;
	margin: 0 1px 0 2px;
	padding: 0 12px 0 10px;
	border-radius: 15px;
	background: #f4f4f4;
	color: #333;
	font-size: 13px;
}
.tb-search input{
	color: #666;
}
.tb-tray{
	display: flex;
	align-items: center;
	justify-content: flex-end;
	gap: 8px;
	margin-right: 2px;
}
.tray-cloud{
	margin: 0 6px 0 8px;
}
.tray-net{
	gap: 9px;
	margin-right: 6px;
}
.clock{
	text-align: right;
}
.tray-cop{
	position: relative;
	margin-left: 8px;
}
.tray-cop span{
	position: absolute;
	right: -1px;
	bottom: 0;
	padding: 0 2px;
	border-radius: 2px;
	background: #f8c030;
	color: #3a2a00;
	font-size: 7px;
	line-height: 8px;
	font-weight: 700;
}
```
